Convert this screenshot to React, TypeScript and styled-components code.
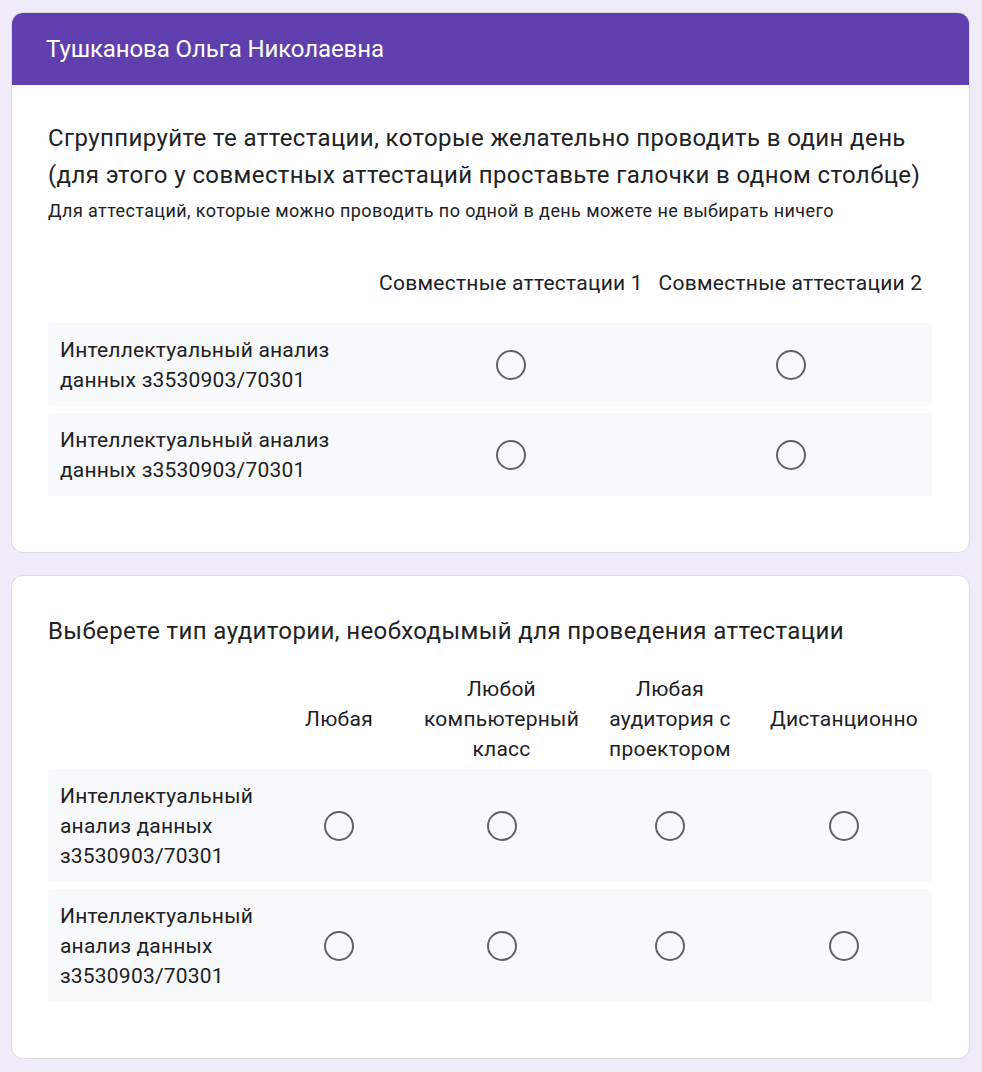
import React from 'react';
import styled, { createGlobalStyle } from 'styled-components';

const GlobalStyle = createGlobalStyle`
  html, body {
    margin: 0;
    padding: 0;
    background: #f0ebf8;
  }
  body {
    font-family: Roboto, "Noto Sans", Arial, sans-serif;
    color: #202124;
  }
`;

interface GridQuestion {
  title: React.ReactNode;
  description?: string;
  columns: React.ReactNode[];
  rows: string[];
  template: string;
}

const rowLabel = 'Интеллектуальный анализ данных з3530903/70301';

const firstQuestion: GridQuestion = {
  title: (
    <>
      Сгруппируйте те аттестации, которые желательно проводить в один день
      <br />
      (для этого у совместных аттестаций проставьте галочки в одном столбце)
    </>
  ),
  description: 'Для аттестаций, которые можно проводить по одной в день можете не выбирать ничего',
  columns: ['Совместные аттестации 1', 'Совместные аттестации 2'],
  rows: [rowLabel, rowLabel],
  template: '325px 276px 1fr',
};

const secondQuestion: GridQuestion = {
  title: 'Выберете тип аудитории, необходымый для проведения аттестации',
  columns: [
    'Любая',
    <>Любой<br />компьютерный<br />класс</>,
    <>Любая<br />аудитория с<br />проектором</>,
    'Дистанционно',
  ],
  rows: [rowLabel, rowLabel],
  template: '211px 160px 165px 172px 1fr',
};

function GridCard(props: { question: GridQuestion; header?: string }): React.ReactElement {
  const { question, header } = props;
  return (
    <Card>
      {header && <CardHeader>{header}</CardHeader>}
      <CardBody $withHeader={!!header}>
        <Title>{question.title}</Title>
        {question.description && <Description>{question.description}</Description>}
        <Table>
          <HeaderRow $template={question.template}>
            <span />
            {question.columns.map((c, i) => (
              <ColumnLabel key={i}>{c}</ColumnLabel>
            ))}
          </HeaderRow>
          {question.rows.map((r, i) => (
            <Row key={i} $template={question.template}>
              <RowLabel>{r}</RowLabel>
              {question.columns.map((_, j) => (
                <Cell key={j}>
                  <Radio />
                </Cell>
              ))}
            </Row>
          ))}
        </Table>
      </CardBody>
    </Card>
  );
}

export default function App(): React.ReactElement {
  return (
    <>
      <GlobalStyle />
      <Page>
        <GridCard question={firstQuestion} header="Тушканова Ольга Николаевна" />
        <GridCard question={secondQuestion} />
      </Page>
    </>
  );
}

const Page = styled.div`
  display: flex;
  flex-direction: column;
  gap: 22px;
  padding: 12px 12px 12px 11px;
`;

const Card = styled.div`
  background: #fff;
  border: 1px solid #dadce0;
  border-radius: 12px;
  overflow: hidden;
`;

const CardHeader = styled.div`
  height: 72px;
  background: #5f3fae;
  color: #fff;
  display: flex;
  align-items: center;
  padding-left: 34px;
  font-size: 24px;
  font-weight: 400;
  letter-spacing: -0.1px;
`;

const CardBody = styled.div<{ $withHeader: boolean }>`
  padding: ${(p) => (p.$withHeader ? '35px' : '37px')} 37px 56px 36px;
`;

const Title = styled.div`
  font-size: 24px;
  line-height: 37px;
  letter-spacing: 0.4px;
`;

const Description = styled.div`
  font-size: 18px;
  line-height: 27px;
  letter-spacing: 0.4px;
  margin-top: 3px;
`;

const Table = styled.div`
  margin-top: 24px;
  display: flex;
  flex-direction: column;
`;

const HeaderRow = styled.div<{ $template: string }>`
  display: grid;
  grid-template-columns: ${(p) => p.$template};
  align-items: center;
  min-height: 70px;
  margin-bottom: 5px;
`;

const ColumnLabel = styled.div`
  text-align: center;
  padding: 0 4px;
  font-size: 21px;
  line-height: 30px;
  letter-spacing: 0.25px;
  white-space: nowrap;
`;

const Row = styled.div<{ $template: string }>`
  display: grid;
  grid-template-columns: ${(p) => p.$template};
  align-items: center;
  padding: 11.5px 0;
  background: #f8f9fa;
  border-radius: 4px;

  & + & {
    margin-top: 7px;
  }
`;

const RowLabel = styled.div`
  padding: 0 8px 0 12px;
  font-size: 21px;
  line-height: 30px;
  letter-spacing: 0.2px;
`;

const Cell = styled.div`
  display: flex;
  justify-content: center;
  align-items: center;
`;

const Radio = styled.span`
  display: block;
  width: 26px;
  height: 26px;
  border: 2px solid #5f6368;
  border-radius: 50%;
`;
